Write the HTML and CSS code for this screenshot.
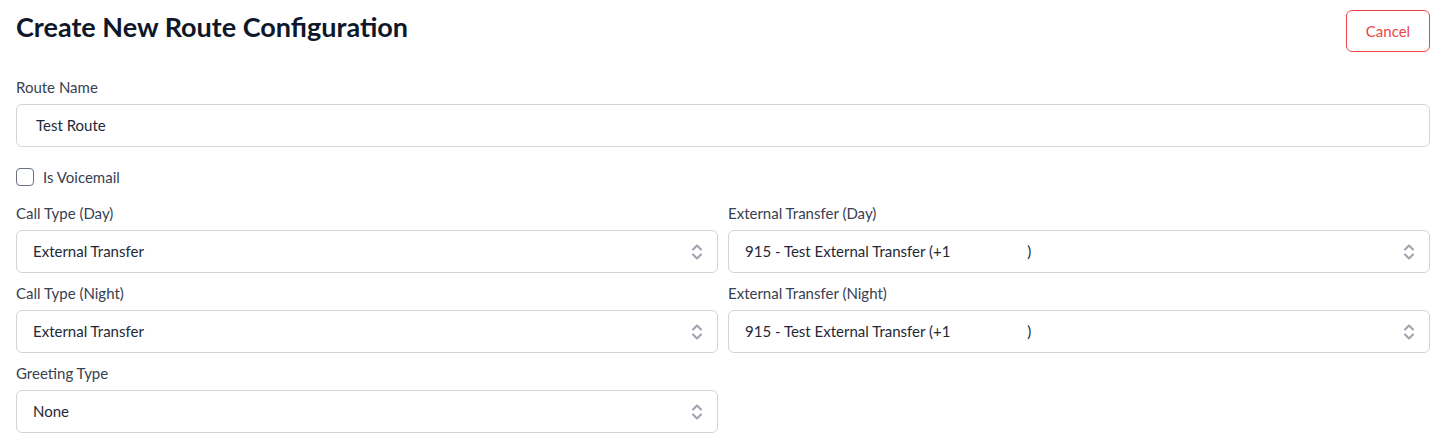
FILE: index.html
```html
<!DOCTYPE html>
<html>
<head>
<meta charset="utf-8">
<link rel="stylesheet" href="styles.css">
</head>
<body>
<div class="page">
  <div class="header">
    <h1 class="title">Create New Route Configuration</h1>
    <button class="btn-cancel">Cancel</button>
  </div>
  <div class="field">
    <label class="label">Route Name</label>
    <div class="input">Test Route</div>
  </div>
  <div class="check-row">
    <span class="checkbox"></span>
    <span class="check-label">Is Voicemail</span>
  </div>
  <div class="grid">
    <div class="field">
      <label class="label">Call Type (Day)</label>
      <div class="select"><span>External Transfer</span><svg class="chev" width="12" height="18" viewBox="0 0 12 18"><path d="M2 6.5 L6 2.5 L10 6.5 M2 11.5 L6 15.5 L10 11.5" fill="none" stroke="#9ca3af" stroke-width="2" stroke-linecap="round" stroke-linejoin="round"/></svg></div>
    </div>
    <div class="field">
      <label class="label">External Transfer (Day)</label>
      <div class="select"><span class="pre">915 - Test External Transfer (+1                    )</span><svg class="chev" width="12" height="18" viewBox="0 0 12 18"><path d="M2 6.5 L6 2.5 L10 6.5 M2 11.5 L6 15.5 L10 11.5" fill="none" stroke="#9ca3af" stroke-width="2" stroke-linecap="round" stroke-linejoin="round"/></svg></div>
    </div>
    <div class="field">
      <label class="label">Call Type (Night)</label>
      <div class="select"><span>External Transfer</span><svg class="chev" width="12" height="18" viewBox="0 0 12 18"><path d="M2 6.5 L6 2.5 L10 6.5 M2 11.5 L6 15.5 L10 11.5" fill="none" stroke="#9ca3af" stroke-width="2" stroke-linecap="round" stroke-linejoin="round"/></svg></div>
    </div>
    <div class="field">
      <label class="label">External Transfer (Night)</label>
      <div class="select"><span class="pre">915 - Test External Transfer (+1                    )</span><svg class="chev" width="12" height="18" viewBox="0 0 12 18"><path d="M2 6.5 L6 2.5 L10 6.5 M2 11.5 L6 15.5 L10 11.5" fill="none" stroke="#9ca3af" stroke-width="2" stroke-linecap="round" stroke-linejoin="round"/></svg></div>
    </div>
    <div class="field">
      <label class="label">Greeting Type</label>
      <div class="select"><span>None</span><svg class="chev" width="12" height="18" viewBox="0 0 12 18"><path d="M2 6.5 L6 2.5 L10 6.5 M2 11.5 L6 15.5 L10 11.5" fill="none" stroke="#9ca3af" stroke-width="2" stroke-linecap="round" stroke-linejoin="round"/></svg></div>
    </div>
  </div>
</div>
</body>
</html>
```
FILE: styles.css
```css
* { box-sizing: border-box; }
html, body { margin: 0; padding: 0; background: #fff; }
body { font-family: Lato, "Noto Sans", sans-serif; color: #1f2937; }
.page { padding: 10px 7px 0 16px; }
.header { display: flex; justify-content: space-between; align-items: flex-start; height: 67px; }
.title { margin: 0; padding-top: 2px; font-size: 27px; font-weight: 700; color: #0f172a; line-height: 30px; }
.btn-cancel { width: 84px; height: 42px; border: 1px solid #ef4444; border-radius: 6px; background: #fff; color: #ef4444; font-family: inherit; font-size: 15px; }
.field { display: flex; flex-direction: column; gap: 7px; }
.label { font-size: 15px; line-height: 20px; color: #374151; }
.input, .select { height: 43px; border: 1px solid #d1d5db; border-radius: 6px; display: flex; align-items: center; font-size: 15px; color: #1f2937; padding-bottom: 2px; }
.input { padding-left: 19px; }
.select { padding-left: 16px; padding-right: 14px; justify-content: space-between; }
.chev { margin-top: 2px; }
.pre { white-space: pre; }
.check-row { display: flex; align-items: center; gap: 9px; margin-top: 20px; height: 20px; }
.checkbox { width: 18px; height: 18px; border: 1.5px solid #6b7280; border-radius: 4px; }
.check-label { font-size: 15px; color: #374151; }
.grid { display: grid; grid-template-columns: 1fr 1fr; column-gap: 10px; row-gap: 10px; margin-top: 16px; }
```
